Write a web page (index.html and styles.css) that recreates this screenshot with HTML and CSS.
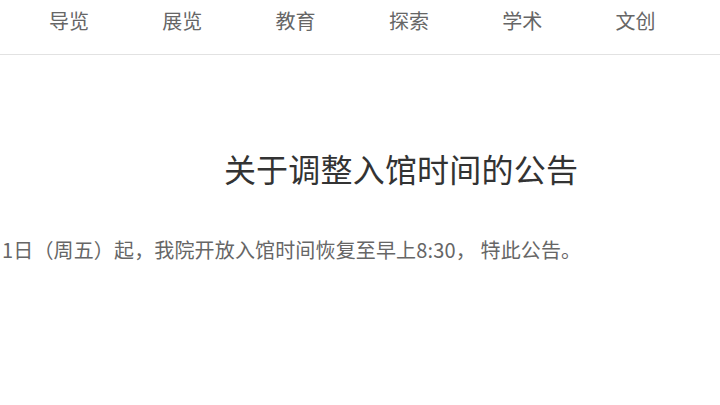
FILE: index.html
```html
<!DOCTYPE html>
<html lang="zh-CN">
<head>
<meta charset="utf-8">
<title>关于调整入馆时间的公告</title>
<link rel="stylesheet" href="styles.css">
</head>
<body>
<header class="topbar">
  <nav class="nav">
    <a class="nav-item" href="#">导览</a>
    <a class="nav-item" href="#">展览</a>
    <a class="nav-item" href="#">教育</a>
    <a class="nav-item" href="#">探索</a>
    <a class="nav-item" href="#">学术</a>
    <a class="nav-item" href="#">文创</a>
  </nav>
</header>
<main class="notice">
  <h1 class="notice-title">关于调整入馆时间的公告</h1>
  <p class="notice-body">1日（周五）起，我院开放入馆时间恢复至早上8:30， 特此公告。</p>
</main>
</body>
</html>
```
FILE: styles.css
```css
html, body {
  margin: 0;
  padding: 0;
  background: #ffffff;
  font-family: "Noto Sans CJK SC", "Noto Sans", sans-serif;
  overflow: hidden;
}
.topbar {
  box-sizing: border-box;
  height: 55px;
  border-bottom: 1px solid #e2e2e2;
}
.nav {
  display: flex;
  padding-left: 48px;
  gap: 71.3px;
}
.nav-item {
  width: 42px;
  text-align: center;
  font-size: 20px;
  line-height: 42px;
  color: #666666;
  text-decoration: none;
  white-space: nowrap;
}
.notice {
  padding-top: 93px;
}
.notice-title {
  margin: 0;
  padding-left: 82px;
  text-align: center;
  font-size: 32px;
  font-weight: normal;
  line-height: 40px;
  letter-spacing: 0.2px;
  color: #333333;
}
.notice-body {
  margin: 47px 0 0 2px;
  font-size: 20px;
  line-height: 30px;
  letter-spacing: 0.15px;
  color: #666666;
  white-space: nowrap;
}
```
